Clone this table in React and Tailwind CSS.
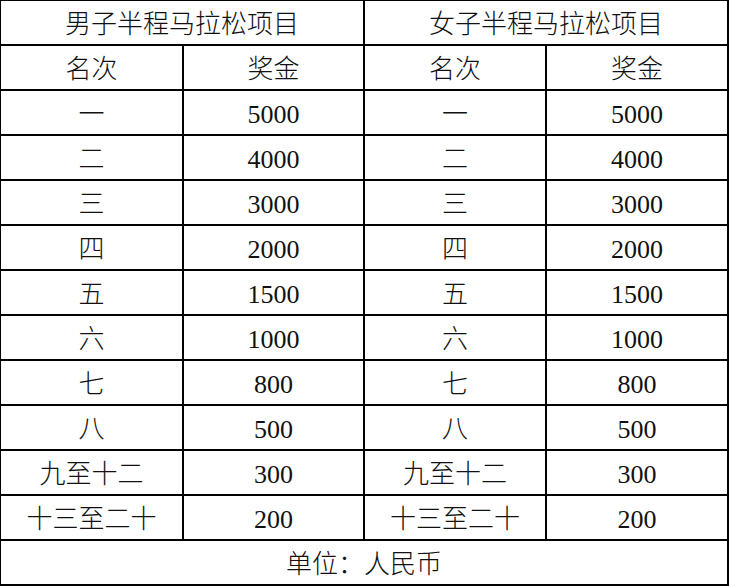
import React from "react";

const rows = [
  ["一", "5000"],
  ["二", "4000"],
  ["三", "3000"],
  ["四", "2000"],
  ["五", "1500"],
  ["六", "1000"],
  ["七", "800"],
  ["八", "500"],
  ["九至十二", "300"],
  ["十三至二十", "200"],
];

function Cell({ children, span }) {
  return (
    <div
      className={`h-[45px] flex items-center justify-center border-r-2 border-b-2 border-black pt-[4px] ${
        span === 2 ? "col-span-2" : span === 4 ? "col-span-4" : ""
      }`}
    >
      {children}
    </div>
  );
}

export default function App() {
  return (
    <div
      className="w-[729px] h-[586px] bg-white text-[#111] overflow-hidden"
      style={{ fontFamily: '"Liberation Serif", "Noto Sans CJK SC", serif' }}
    >
      <div className="grid grid-cols-[183px_181px_182px_182px] border-t border-l border-black text-[26px] leading-none font-light">
        <Cell span={2}>男子半程马拉松项目</Cell>
        <Cell span={2}>女子半程马拉松项目</Cell>
        <Cell>名次</Cell>
        <Cell>奖金</Cell>
        <Cell>名次</Cell>
        <Cell>奖金</Cell>
        {rows.map(([rank, prize]) => (
          <React.Fragment key={rank}>
            <Cell>{rank}</Cell>
            <Cell>
              <span className="font-normal">{prize}</span>
            </Cell>
            <Cell>{rank}</Cell>
            <Cell>
              <span className="font-normal">{prize}</span>
            </Cell>
          </React.Fragment>
        ))}
        <Cell span={4}>单位：人民币</Cell>
      </div>
    </div>
  );
}
